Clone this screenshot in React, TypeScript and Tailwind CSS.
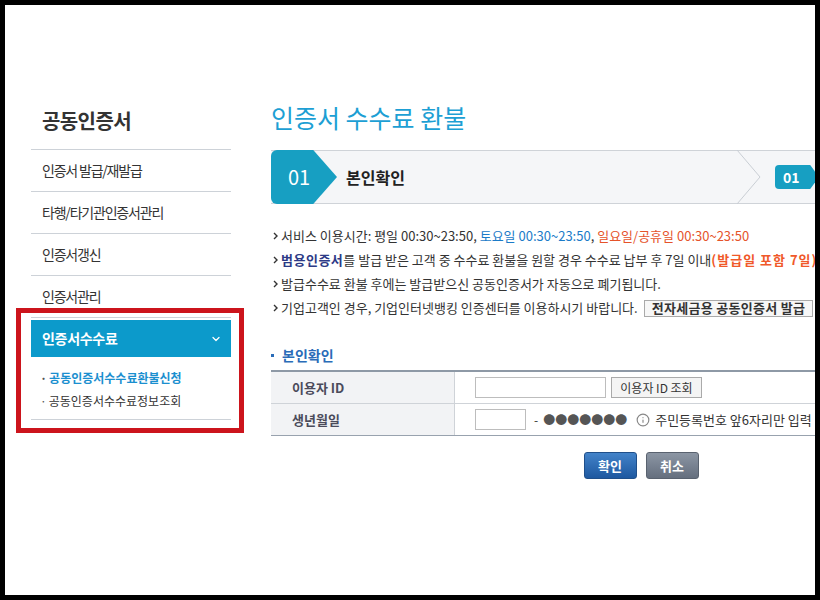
import React from 'react';
import { ChevronDown, Info } from 'lucide-react';

const menu = ['인증서 발급/재발급', '타행/타기관인증서관리', '인증서갱신', '인증서관리'];

const Arrow = () => (
  <svg width="5" height="8" viewBox="0 0 5 8" className="ml-[2px] mr-[3px] shrink-0">
    <path d="M1 1 L4 4 L1 7" stroke="#333" strokeWidth="1.4" fill="none" />
  </svg>
);

const Sidebar = () => (
  <aside className="w-[200px] ml-[26px] shrink-0 pt-[102px]">
    <h1 className="h-[28px] leading-[28px] pl-[11px] mb-[14px] text-[20px] font-bold text-[#333] tracking-[-0.6px]">
      공동인증서
    </h1>
    <ul>
      {menu.map((m) => (
        <li
          key={m}
          className="h-[42px] border-t border-[#cdd2d8] flex items-center pl-[11px] text-[14px] text-[#333] tracking-[-1.2px]"
        >
          {m}
        </li>
      ))}
    </ul>
    {/* active group */}
    <div className="relative border-t border-b border-[#cdd2d8] pt-[2px] pb-[8px]">
      <div className="h-[37px] bg-[#0c9acb] flex items-center justify-between pl-[11px] pr-[9px]">
        <span className="text-white font-bold text-[14px] tracking-[-0.3px]">인증서수수료</span>
        <ChevronDown size={12} strokeWidth={2.5} color="#fff" />
      </div>
      <div className="pt-[11px] flex flex-col gap-[3px] pl-[9px] text-[12px]">
        <div className="h-[20px] flex items-center font-bold text-[#1b8fcf]">
          <span className="mr-[2px] text-[#555]">·</span>공동인증서수수료환불신청
        </div>
        <div className="h-[20px] flex items-center text-[#333]">
          <span className="mr-[2px] text-[#555]">·</span>공동인증서수수료정보조회
        </div>
      </div>
      <div className="absolute -left-[15px] -right-[13px] -top-[10px] -bottom-[14px] border-[5px] border-[#cc141c] pointer-events-none" />
    </div>
  </aside>
);

const Main = () => (
  <main className="ml-[40px] pt-[95px] w-[740px] shrink-0">
    <h2 className="h-[34px] leading-[34px] text-[25px] text-[#1d9fd4] mb-[16px]">인증서 수수료 환불</h2>

    {/* step bar */}
    <div className="h-[54px] border-y border-[#cfd3d8] bg-[#f5f6f8] flex items-center">
      <div className="w-[466px] flex items-center self-stretch">
        <div className="-my-px h-[54px] w-[66px] rounded-l-[6px] bg-[#179fc2] [clip-path:polygon(0_0,64%_0,100%_50%,64%_100%,0_100%)] flex items-center pl-[17px] text-white text-[20px]">
          01
        </div>
        <span className="ml-[9px] text-[16px] font-bold text-[#222]">본인확인</span>
      </div>
      <svg width="24" height="54" viewBox="0 0 24 54" className="shrink-0 -my-px">
        <polyline points="0,0 23,27 0,54" stroke="#c9ced4" strokeWidth="1" fill="none" />
      </svg>
      <div className="ml-[14px] h-[24px] w-[44px] rounded-l-[4px] bg-[#179fc2] [clip-path:polygon(0_0,80%_0,100%_50%,80%_100%,0_100%)] flex items-center pl-[8px] text-white text-[14px] font-bold">
        01
      </div>
    </div>

    {/* notices */}
    <div className="mt-[20px] text-[13px] text-[#333] whitespace-nowrap">
      <div className="h-[24px] flex items-center">
        <Arrow />
        서비스 이용시간: 평일 00:30~23:50,&nbsp;<span className="text-[#1b7bc8]">토요일 00:30~23:50</span>,&nbsp;
        <span className="text-[#e5532a]">일요일/공휴일 00:30~23:50</span>
      </div>
      <div className="h-[24px] flex items-center">
        <Arrow />
        <b className="text-[#2d3a86] tracking-[0.5px]">범용인증서</b>를 발급 받은 고객 중 수수료 환불을 원할 경우 수수료 납부 후 7일 이내
        <b className="text-[#f0592a] tracking-[1px]">(발급일 포함 7일)</b>
      </div>
      <div className="h-[24px] flex items-center">
        <Arrow />
        발급수수료 환불 후에는 발급받으신 공동인증서가 자동으로 폐기됩니다.
      </div>
      <div className="h-[24px] flex items-center">
        <Arrow />
        기업고객인 경우, 기업인터넷뱅킹 인증센터를 이용하시기 바랍니다.
        <span className="ml-[6px] h-[17px] px-[7px] border border-[#aaa] bg-[#f7f7f7] font-bold flex items-center text-[#333] tracking-[0.3px]">
          전자세금용 공동인증서 발급
        </span>
      </div>
    </div>

    {/* section */}
    <div className="mt-[24px] h-[22px] flex items-center text-[14px] font-bold text-[#2a6cb8]">
      <span className="w-[3px] h-[3px] bg-[#2a6cb8] mr-[8px]" />
      본인확인
    </div>
    <div className="mt-[4px] border-t-2 border-[#8e99a6] text-[13px]">
      <div className="h-[32px] flex border-b border-[#cfd3d8]">
        <div className="w-[184px] bg-[#f2f3f5] border-r border-[#cfd3d8] flex items-center pl-[21px] font-bold text-[#4b4b5b]">
          이용자 ID
        </div>
        <div className="flex items-center pl-[20px]">
          <input className="w-[131px] h-[21px] border border-[#bdbdbd] bg-white" />
          <button className="ml-[5px] w-[91px] h-[21px] border border-[#aaa] bg-[#f4f4f4] text-[12px] text-[#333]">
            이용자 ID 조회
          </button>
        </div>
      </div>
      <div className="h-[32px] flex border-b border-[#98a2ae]">
        <div className="w-[184px] bg-[#f2f3f5] border-r border-[#cfd3d8] flex items-center pl-[21px] font-bold text-[#4b4b5b]">
          생년월일
        </div>
        <div className="flex items-center pl-[20px] text-[12px] text-[#333] whitespace-nowrap">
          <input className="w-[51px] h-[21px] border border-[#bdbdbd] bg-white" />
          <span className="ml-[8px]">-</span>
          <span className="ml-[5px] text-[#555]">●●●●●●●</span>
          <Info size={14} color="#888" className="ml-[9px]" />
          <span className="ml-[5px] text-[13px]">주민등록번호 앞6자리만 입력</span>
        </div>
      </div>
    </div>

    <div className="mt-[16px] flex justify-center gap-[9px]">
      <button className="w-[53px] h-[27px] rounded-[3px] border border-[#1f4f8a] bg-gradient-to-b from-[#4383c9] to-[#1d58a0] text-white font-bold text-[13px]">
        확인
      </button>
      <button className="w-[53px] h-[27px] rounded-[3px] border border-[#59626f] bg-gradient-to-b from-[#8c96a4] to-[#656f7e] text-white font-bold text-[13px]">
        취소
      </button>
    </div>
  </main>
);

export default function App() {
  return (
    <div className="w-[820px] h-[600px] border-[5px] border-black bg-white flex overflow-hidden font-['Noto_Sans_CJK_KR',sans-serif]">
      <Sidebar />
      <Main />
    </div>
  );
}
